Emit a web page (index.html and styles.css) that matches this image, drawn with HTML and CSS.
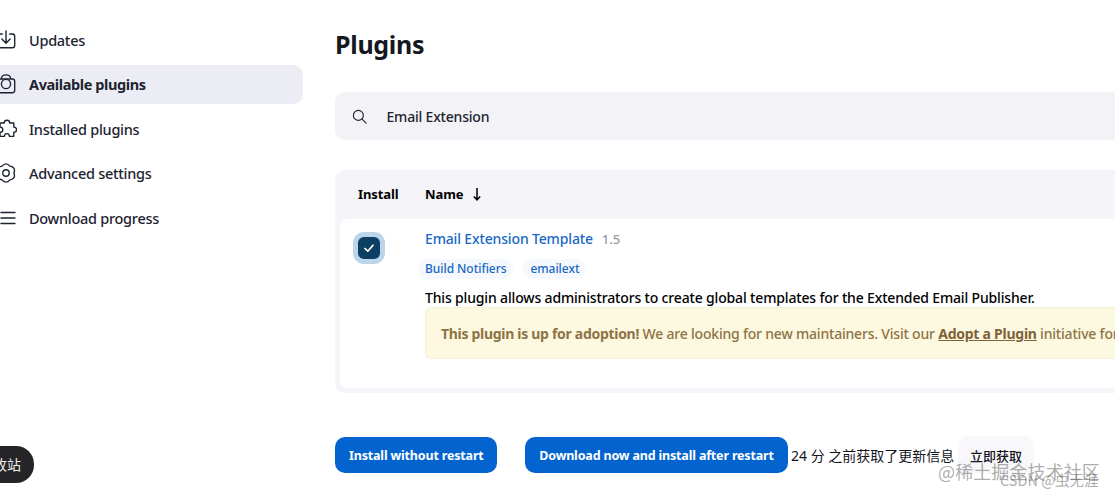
FILE: index.html
```html
<!DOCTYPE html>
<html lang="en">
<head>
<meta charset="utf-8">
<title>Plugins</title>
<link rel="stylesheet" href="styles.css">
</head>
<body>
<div class="page">
  <nav class="side">
    <a class="nav-item nav-a"><svg class="ico" viewBox="0 0 24 24"><path d="M8 5.500H5a2.500 2.500 0 0 0-2.500 2.500v10A2.500 2.500 0 0 0 5 20.500h14a2.500 2.500 0 0 0 2.500-2.500V8A2.500 2.500 0 0 0 19 5.500h-3M12 2v13M7.500 11l4.500 4.500 4.500-4.500"/></svg><span>Updates</span></a>
    <a class="nav-item active"><svg class="ico" viewBox="0 0 24 24"><path d="M5 6.500h14a2.500 2.500 0 0 1 2.500 2.500v10a2.500 2.500 0 0 1-2.500 2.500H5A2.500 2.500 0 0 1 2.500 19V9A2.500 2.500 0 0 1 5 6.500zM7 6.500V6a5 4 0 0 1 10 0v.5"/><circle cx="12" cy="12" r="5"/></svg><span>Available plugins</span></a>
    <a class="nav-item"><svg class="ico" viewBox="0 0 24 24"><path d="M13 2.500c2 0 3 1.500 3 3h4.500v4.500c2 0 3 1 3 2.800s-1 2.800-3 2.800v4.400h-4.800c0-2-1-3-2.700-3s-2.700 1-2.700 3H5.500v-4.400c2 0 3-1 3-2.800s-1-2.800-3-2.800V5.500H10c0-1.500 1-3 3-3z"/></svg><span>Installed plugins</span></a>
    <a class="nav-item"><svg class="ico" viewBox="0 0 24 24"><path d="M7.700 4.550Q12-.5 16.300 4.550 23 5.500 20.600 12 23 18.500 16.300 19.450 12 24.500 7.700 19.450 1 18.500 3.400 12 1 5.500 7.700 4.550z"/><circle cx="12" cy="12" r="3.500"/></svg><span>Advanced settings</span></a>
    <a class="nav-item"><svg class="ico" viewBox="0 0 24 24"><path d="M6.500 6h15.300M6.500 12h15.300M6.500 18h15.300"/></svg><span>Download progress</span></a>
  </nav>
  <main class="main">
    <h1 class="title">Plugins</h1>
    <div class="search">
      <svg class="search-ico" viewBox="0 0 16 16"><circle cx="6.800" cy="6.800" r="5.300"/><path d="M10.700 10.700l4.300 4.300"/></svg>
      <span>Email Extension</span>
    </div>
    <section class="table">
      <div class="thead">
        <span class="th-install">Install</span>
        <span class="th-name">Name</span>
        <svg class="sort" viewBox="0 0 10 14"><path d="M5 1v11.500M1.800 9.500L5 12.800l3.200-3.300"/></svg>
      </div>
      <div class="row">
        <div class="check-cell">
          <span class="check"><svg viewBox="0 0 12 12"><path d="M2 6.500l2.800 2.700L10 3.200"/></svg></span>
        </div>
        <div class="info">
          <div class="name-line"><a class="plugin-name">Email Extension Template</a><span class="version">1.5</span></div>
          <div class="tags"><span class="tag">Build Notifiers</span><span class="tag">emailext</span></div>
          <p class="desc">This plugin allows administrators to create global templates for the Extended Email Publisher.</p>
          <div class="notice"><b>This plugin is up for adoption!</b> We are looking for new maintainers. Visit our <a class="adopt">Adopt a Plugin</a> initiative for more information.</div>
        </div>
      </div>
    </section>
    <div class="actions">
      <button class="btn btn-first">Install without restart</button>
      <button class="btn btn-second">Download now and install after restart</button>
      <span class="updated">24 分 之前获取了更新信息</span>
      <button class="fetch">立即获取</button>
    </div>
  </main>
</div>
<div class="pill">收站</div>
<div class="mark mark-a">@稀土掘金技术社区</div>
<div class="mark mark-b">CSDN @虫无涯</div>
</body>
</html>
```
FILE: styles.css
```css
html, body { margin: 0; padding: 0; height: 498px; overflow: hidden; background: #fff; }
body { font-family: "Noto Sans", "Noto Sans CJK SC", sans-serif; color: #14141f; width: 1115px; position: relative; }
.page { display: flex; align-items: flex-start; width: 1500px; margin-left: -20px; }
.side { width: 323px; flex: none; display: flex; flex-direction: column; gap: 5.5px; padding-top: 20px; }
.nav-item { height: 39px; display: flex; align-items: center; gap: 12px; padding-left: 15px; border-radius: 10px; font-size: 14.500px; font-weight: 500; color: #1d2330; letter-spacing: -.28px; }
.nav-item.active { background: #ecedf4; font-weight: 700; letter-spacing: -.4px; }
.ico { width: 22px; height: 22px; flex: none; fill: none; stroke: #1d2330; stroke-width: 1.500; stroke-linecap: round; stroke-linejoin: round; }
.main { margin-left: 32px; width: 1100px; flex: none; }
.title { margin: 0; font-size: 25px; line-height: 34px; font-weight: 700; padding-top: 27px; color: #14181f; letter-spacing: -.3px; }
.search { margin-top: 31px; height: 48px; background: #f2f2f7; border-radius: 10px; display: flex; align-items: center; padding-left: 17px; gap: 19.5px; font-size: 14px; font-weight: 500; letter-spacing: -.2px; color: #1d2330; }
.search-ico { width: 15px; height: 15px; fill: none; stroke: #1d2330; stroke-width: 1.200; stroke-linecap: round; }
.table { margin-top: 30px; background: #f4f4f9; border-radius: 10px; padding: 0 5px 5px; }
.thead { height: 49px; box-sizing: border-box; padding-bottom: 2px; display: flex; align-items: center; font-size: 13px; font-weight: 700; color: #000; letter-spacing: -.1px; }
.th-install { width: 85px; padding-left: 18px; box-sizing: border-box; }
.th-name { margin-right: 9px; }
.sort { width: 10px; height: 14px; fill: none; stroke: #000; stroke-width: 1.500; }
.row { background: #fff; border-radius: 8px; height: 169px; display: flex; }
.check-cell { width: 85px; flex: none; padding: 18px 0 0 18px; box-sizing: border-box; }
.check { display: flex; align-items: center; justify-content: center; width: 22px; height: 22px; background: #0c3f63; border-radius: 6px; box-shadow: 0 0 0 5px #bcd5e8; }
.check svg { width: 12px; height: 12px; fill: none; stroke: #fff; stroke-width: 1.700; stroke-linecap: round; stroke-linejoin: round; }
.info { flex: 1; padding-top: 10px; }
.name-line { display: flex; align-items: baseline; gap: 9px; height: 20px; line-height: 20px; }
.plugin-name { font-size: 14px; font-weight: 500; color: #1868c4; letter-spacing: -.15px; }
.version { font-size: 13px; font-weight: 500; color: #9a9aa3; }
.tags { display: flex; gap: 10px; margin-top: 10px; margin-left: -7px; height: 20px; align-items: center; }
.tag { font-size: 12px; font-weight: 500; color: #1868c4; background: #f5f8fc; border-radius: 10px; padding: 0 7px; line-height: 20px; letter-spacing: -.05px; }
.desc { margin: 9px 0 0; font-size: 14px; line-height: 19px; font-weight: 500; color: #000; letter-spacing: -.16px; white-space: nowrap; }
.notice { height: 52px; line-height: 52px; padding-left: 15px; background: #fdf8e0; border: 1px solid #f6f1d8; border-right: 0; box-sizing: border-box; border-radius: 6px 0 0 6px; font-size: 14px; font-weight: 500; color: #8e7345; white-space: nowrap; letter-spacing: -.2px; }
.adopt { font-weight: 700; text-decoration: underline; color: #7f6338; letter-spacing: -.25px; }
.notice b { font-weight: 700; letter-spacing: -.3px; }
.actions { margin-top: 43px; display: flex; align-items: center; }
.btn { height: 36px; border: 0; border-radius: 10px; background: #0364d0; color: #fff; font: 700 12.500px "Noto Sans", sans-serif; letter-spacing: -.17px; padding: 0 14px; white-space: nowrap; }
.btn-first { margin-right: 28px; width: 162px; }
.btn-second { width: 263px; }
.updated { margin-left: 3px; font-size: 14px; color: #14141f; white-space: nowrap; width: 167px; }
.fetch { height: 38px; width: 76px; border: 0; border-radius: 10px; background: #f8f8fa; color: #14141f; font: 500 13px "Noto Sans CJK SC", sans-serif; }
.pill { position: absolute; left: -40px; top: 446px; width: 74px; height: 37px; box-sizing: border-box; padding-right: 13px; text-align: right; line-height: 37px; background: #252528; border-radius: 18px; color: #eee; font-size: 14px; font-family: "Noto Sans CJK SC", sans-serif; }
.mark { position: absolute; white-space: nowrap; font-family: "Noto Sans CJK SC", sans-serif; color: rgba(90, 90, 90, .5); }
.mark-a { left: 938px; top: 459px; font-size: 18px; line-height: 24px; letter-spacing: .1px; }
.mark-b { left: 1000px; top: 470px; font-size: 14.500px; line-height: 20px; }
```
